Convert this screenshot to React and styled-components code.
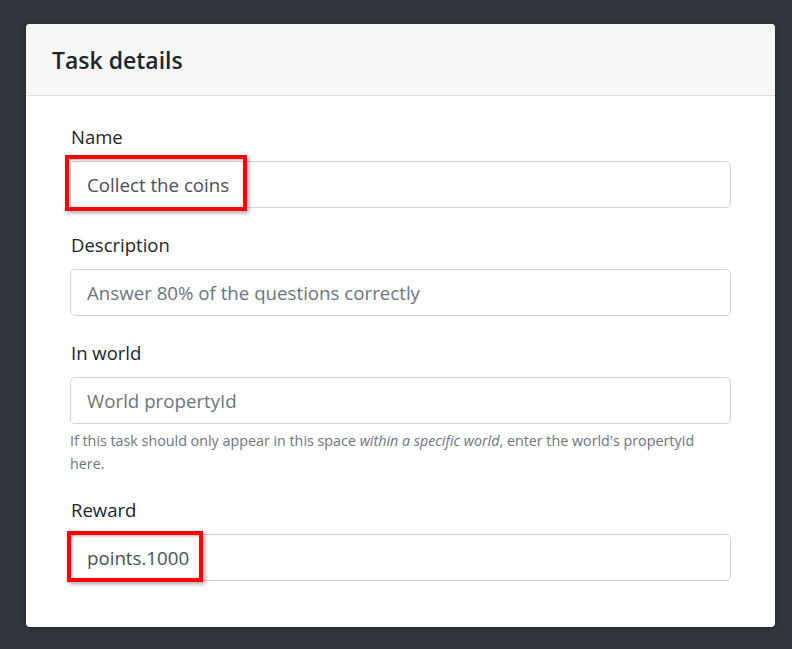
import React from "react";
import styled, { createGlobalStyle } from "styled-components";

const GlobalStyle = createGlobalStyle`
  html, body {
    margin: 0;
    padding: 0;
    background: #33373d;
  }
  body {
    font-family: "Open Sans", "Noto Sans", sans-serif;
    color: #212529;
  }
  * {
    box-sizing: border-box;
  }
`;

const Page = styled.div`
  min-height: 649px;
  padding: 24px 17px 23px 26px;
`;

const Card = styled.section`
  width: 749px;
  background: #fff;
  border-radius: 4px;
  box-shadow: 0 1px 6px rgba(0, 0, 0, 0.35);
  overflow: hidden;
`;

const CardHeader = styled.header`
  height: 72px;
  display: flex;
  align-items: center;
  padding: 0 26px;
  background: #f7f7f7;
  border-bottom: 1px solid #dcdcdc;
  h2 {
    margin: 0;
    font-size: 23px;
    font-weight: 600;
    color: #212529;
  }
`;

const CardBody = styled.div`
  padding: 26px 44px 46px 44px;
  display: flex;
  flex-direction: column;
  gap: 22px;
`;

const Group = styled.div`
  display: flex;
  flex-direction: column;
`;

const Label = styled.label`
  display: block;
  height: 29px;
  line-height: 29px;
  margin: 0 0 10px 1px;
  font-size: 18.5px;
  color: #212529;
`;

const InputWrap = styled.div`
  position: relative;
`;

const Input = styled.input`
  display: block;
  width: 100%;
  height: 47px;
  padding: 0 16px;
  font-family: inherit;
  font-size: 18.7px;
  color: #495057;
  background: #fff;
  border: 1px solid #ced4da;
  border-radius: 5px;
  outline: none;
  &::placeholder {
    color: #6c757d;
    opacity: 1;
  }
`;

const Highlight = styled.span`
  position: absolute;
  left: ${(p) => p.$left}px;
  top: ${(p) => p.$top}px;
  width: ${(p) => p.$width}px;
  height: ${(p) => p.$height}px;
  border: 4px solid #ff0000;
  box-shadow: 2px 2px 4px rgba(0, 0, 0, 0.35),
    inset 1px 1px 3px rgba(0, 0, 0, 0.3);
  pointer-events: none;
`;

const Help = styled.small`
  display: block;
  margin: 5px 0 -2px;
  padding-right: 12px;
  font-size: 14.3px;
  line-height: 23px;
  color: #6c757d;
  em {
    font-style: italic;
  }
`;

export default function App() {
  return (
    <>
      <GlobalStyle />
      <Page>
        <Card>
          <CardHeader>
            <h2>Task details</h2>
          </CardHeader>
          <CardBody>
            <Group>
              <Label>Name</Label>
              <InputWrap>
                <Input defaultValue="Collect the coins" />
                <Highlight $left={-5} $top={-6} $width={182} $height={56} />
              </InputWrap>
            </Group>
            <Group>
              <Label>Description</Label>
              <Input placeholder="Answer 80% of the questions correctly" />
            </Group>
            <Group>
              <Label>In world</Label>
              <Input placeholder="World propertyId" />
              <Help>
                If this task should only appear in this space{" "}
                <em>within a specific world</em>, enter the world's propertyId
                here.
              </Help>
            </Group>
            <Group>
              <Label>Reward</Label>
              <InputWrap>
                <Input defaultValue="points.1000" />
                <Highlight $left={-3} $top={-3} $width={136} $height={51} />
              </InputWrap>
            </Group>
          </CardBody>
        </Card>
      </Page>
    </>
  );
}
